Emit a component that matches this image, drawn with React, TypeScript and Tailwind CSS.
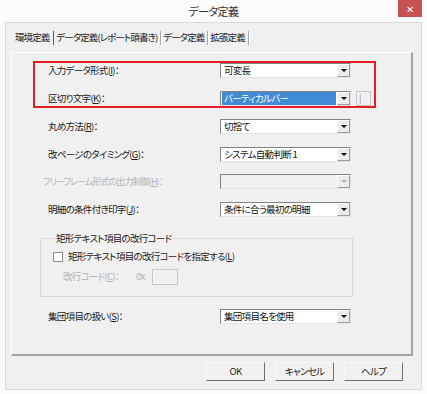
import React from "react";

const font = "font-['Noto_Sans_CJK_JP',sans-serif] [font-feature-settings:'palt'] text-[9.5px] tracking-[-0.7px] leading-none";

function U({ c }: { c: string }) {
  return <span className="underline underline-offset-[1px]">{c}</span>;
}

function Arrow({ disabled }: { disabled?: boolean }) {
  return (
    <div className="flex w-[13px] items-center justify-center border border-t-white border-l-white border-r-[#9d9d9d] border-b-[#9d9d9d] bg-[#ececec]">
      <div
        className={
          "h-0 w-0 border-x-[3px] border-t-[3px] border-x-transparent " +
          (disabled ? "border-t-[#b4b4b4]" : "border-t-black")
        }
      />
    </div>
  );
}

function Select({ value, selected, disabled }: { value?: string; selected?: boolean; disabled?: boolean }) {
  return (
    <div
      className={
        "flex h-[15px] w-[131px] border border-t-[#828282] border-l-[#828282] border-r-[#e3e3e3] border-b-[#e3e3e3] " +
        (disabled ? "bg-[#f0f0f0]" : "bg-white")
      }
    >
      <div className="flex flex-1 items-center pl-px pr-px">
        {value && (
          <span
            className={
              "flex h-full flex-1 items-center whitespace-pre pl-[2px] " + (selected ? "bg-[#3f8bd6] text-white" : "text-[#111]")
            }
          >
            {value}
          </span>
        )}
      </div>
      <Arrow disabled={disabled} />
    </div>
  );
}

function Row({ label, children, disabled, className = "" }: { label: React.ReactNode; children: React.ReactNode; disabled?: boolean; className?: string }) {
  return (
    <div className={"flex items-center " + className}>
      <div className={"w-[172px] " + (disabled ? "-ml-[5px] mr-[5px] text-[9px] tracking-[-0.9px] text-[#b4b4b4]" : "text-[#1a1a1a]")}>{label}</div>
      {children}
    </div>
  );
}

export default function App() {
  return (
    <div className={"flex h-[394px] w-[427px] flex-col bg-[#fbfbfb] " + font}>
      {/* title bar */}
      <div className="grid h-[22px] grid-cols-[29px_1fr_29px]">
        <div />
        <div className="flex items-center justify-center text-[11px] tracking-[-0.6px] text-[#333]">データ定義</div>
        <div className="flex justify-start">
          <div className="flex h-[17px] w-[24px] items-center justify-center bg-[#c75050] text-[10px] tracking-normal text-white">✕</div>
        </div>
      </div>

      {/* client */}
      <div className="mx-[5px] mb-[4px] flex flex-1 flex-col border border-[#dadada] bg-[#f0f0f0]">
        {/* tabs */}
        <div className="flex h-[29px] items-start pl-[8px] pt-[8px] tracking-[-0.9px] text-[#1a1a1a]">
          {["環境定義", "データ定義(レポート頭書き)", "データ定義", "拡張定義"].map((t, i) => (
            <div key={t} className="flex items-center">
              <span className={"px-[1px] " + (i === 0 ? "pr-[2px]" : "")}>{t}</span>
              <span className={"ml-[2px] h-[14px] w-[2px] border-l " + (i === 0 ? "border-[#555]" : "border-[#a8a8a8] border-r border-r-white")} />
            </div>
          ))}
        </div>

        {/* tab panel */}
        <div className="ml-[5px] mr-[8px] flex h-[304px] flex-col border-r-2 border-b-2 border-t border-l border-t-white border-l-white border-r-[#a3a3a3] border-b-[#a3a3a3]">
          {/* red annotation box */}
          <div className="ml-[21px] mt-[8px] flex w-[343px] flex-col gap-[13px] border-2 border-[#e41e26] pl-[13px]">
            <Row label={<>入力データ形式(<U c="I" />)：</>}>
              <Select value="可変長" />
            </Row>
            <Row label={<>区切り文字(<U c="K" />)：</>}>
              <Select value="バーティカルバー" selected />
              <div className="ml-[5px] flex h-[15px] w-[15px] items-center border border-[#c6c6c6] bg-[#f0f0f0] pl-[2px] text-[#9a9a9a]">|</div>
            </Row>
          </div>

          <div className="ml-[36px] mt-[11px] flex flex-col gap-[13px]">
            <Row label={<>丸め方法(<U c="R" />)：</>}>
              <Select value="切捨て" />
            </Row>
            <Row label={<>改ページのタイミング(<U c="G" />)：</>}>
              <Select value="システム自動判断 1" />
            </Row>
            <Row label={<>フリーフレーム形式の出力制御(<U c="H" />)：</>} disabled className="-mt-px">
              <Select disabled />
            </Row>
            <Row label={<>明細の条件付き印字(<U c="J" />)：</>}>
              <Select value="条件に合う最初の明細" />
            </Row>
          </div>

          <fieldset className="ml-[28px] mt-[17px] h-[63px] w-[313px] border border-[#d8d8d8] pl-[12px]">
            <legend className="ml-[2px] px-[1px] text-[#1a1a1a]">矩形テキスト項目の改行コード</legend>
            <div className="mt-[8px] flex items-center gap-[5px] text-[#1a1a1a]">
              <div className="h-[10px] w-[10px] border border-[#8e8e8e] bg-white" />
              <span>
                矩形テキスト項目の改行コードを指定する(<U c="L" />)
              </span>
            </div>
            <div className="mt-[7px] flex items-center pl-[10px] text-[#b0b0b0]">
              <span className="w-[73px]">
                改行コード(<U c="C" />)：
              </span>
              <span className="w-[16px]">0x</span>
              <div className="h-[16px] w-[26px] border border-[#c8c8c8] bg-[#f0f0f0]" />
            </div>
          </fieldset>

          <Row label={<>集団項目の扱い(<U c="S" />)：</>} className="ml-[36px] mt-[12px]">
            <Select value="集団項目名を使用" />
          </Row>
        </div>

        {/* buttons */}
        <div className="mt-[6px] flex justify-end gap-[10px] pr-[18px]">
          {["OK", "キャンセル", "ヘルプ"].map((b) => (
            <div
              key={b}
              className="flex h-[19px] w-[59px] items-center justify-center border border-t-[#f8f8f8] border-l-[#f8f8f8] border-r-[#707070] border-b-[#707070] bg-[#f0f0f0] text-[#1a1a1a]"
            >
              {b}
            </div>
          ))}
        </div>
      </div>
    </div>
  );
}
